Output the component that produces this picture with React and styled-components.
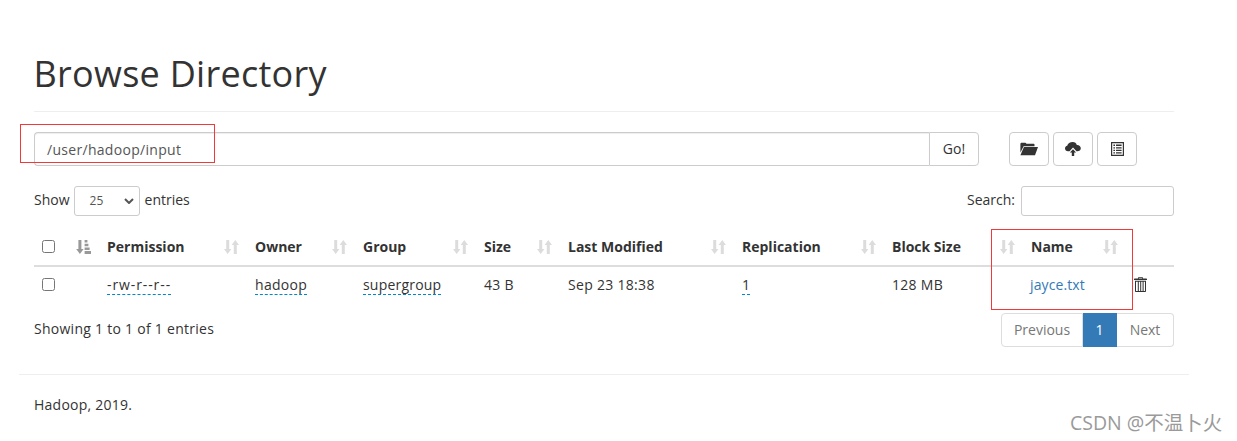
import React from 'react';
import styled, { createGlobalStyle } from 'styled-components';

const GlobalStyle = createGlobalStyle`
  * { box-sizing: border-box; }
  html, body { margin: 0; padding: 0; background: #fff; }
  body {
    font-family: "Open Sans", "Noto Sans", "Liberation Sans", sans-serif;
    font-size: 14px;
    line-height: 20px;
    color: #333;
  }
`;

const Page = styled.div`
  position: relative;
  width: 1237px;
  height: 441px;
  padding-left: 19px;
  overflow: hidden;
`;

const Container = styled.div`
  width: 1170px;
`;

const Content = styled.div`
  padding: 0 15px;
`;

const Header = styled.div`
  height: 112px;
  padding-top: 50px;
  border-bottom: 1px solid #eee;
`;

const Title = styled.h1`
  margin: 0 0 0 -0.5px;
  font-size: 36px;
  font-weight: 400;
  line-height: 48px;
  letter-spacing: 0.28px;
`;

const Toolbar = styled.div`
  display: flex;
  margin-top: 20px;
`;

const PathGroup = styled.div`
  display: flex;
  width: 945px;
  height: 34px;
`;

const PathInput = styled.div`
  flex: 1;
  padding: 7px 12px;
  border: 1px solid #ccc;
  border-right: 0;
  border-radius: 4px 0 0 4px;
  color: #555;
  letter-spacing: 0.3px;
  box-shadow: inset 0 1px 1px rgba(0, 0, 0, 0.075);
`;

const Button = styled.button`
  display: flex;
  align-items: center;
  justify-content: center;
  width: ${(p) => p.$width || 40}px;
  height: 34px;
  padding: 0;
  border: 1px solid #ccc;
  border-radius: ${(p) => (p.$joined ? '0 4px 4px 0' : '4px')};
  background: #fff;
  color: #333;
  font: inherit;
`;

const IconGroup = styled.div`
  display: flex;
  gap: 4px;
  margin-left: 30px;
`;

const Controls = styled.div`
  display: flex;
  justify-content: space-between;
  align-items: center;
  height: 30px;
  margin-top: 20px;
`;

const Label = styled.div`
  display: flex;
  align-items: center;
  gap: 4px;
  margin-top: -2px;
`;

const SelectBox = styled.div`
  display: flex;
  align-items: center;
  justify-content: space-between;
  width: 66px;
  height: 30px;
  margin: 2px 1px 0 0;
  padding: 0 5px 0 15px;
  border: 1px solid #ccc;
  border-radius: 3px;
  font-size: 12px;
  color: #555;
`;

const SearchBox = styled.div`
  width: 153px;
  height: 30px;
  margin-top: 2px;
  margin-left: 2px;
  border: 1px solid #ccc;
  border-radius: 3px;
`;

const Table = styled.table`
  width: 1140px;
  margin-top: 12px;
  border-collapse: collapse;
  table-layout: fixed;
`;

const Th = styled.th`
  height: 38px;
  padding: 8px;
  border-bottom: 2px solid #ddd;
  text-align: left;
  font-weight: 700;
  vertical-align: middle;
`;

const ThInner = styled.div`
  display: flex;
  align-items: center;
  justify-content: space-between;
`;

const Td = styled.td`
  height: 37px;
  padding: 8px;
  vertical-align: middle;
  letter-spacing: 0.3px;
`;

const Check = styled.span`
  display: block;
  width: 13px;
  height: 13px;
  margin-top: -1px;
  border: 1px solid #767676;
  border-radius: 2.5px;
  background: #fff;
`;

const Editable = styled.span`
  display: inline-block;
  line-height: 19px;
  border-bottom: 1px dashed #08c;
  letter-spacing: ${(p) => p.$spacing || 0.2}px;
`;

const FileLink = styled.span`
  color: #337ab7;
  margin-left: -1px;
  letter-spacing: 0.1px;
`;

const Footer = styled.div`
  display: flex;
  justify-content: space-between;
  align-items: flex-start;
  margin-top: 10px;
`;

const Info = styled.div`
  padding-top: 6px;
  letter-spacing: 0.27px;
`;

const Pagination = styled.div`
  display: flex;
  height: 34px;
`;

const PageItem = styled.span`
  display: flex;
  align-items: center;
  justify-content: center;
  width: ${(p) => p.$width}px;
  border: 1px solid ${(p) => (p.$active ? '#337ab7' : '#ddd')};
  border-left-width: ${(p) => (p.$first ? 1 : 0)}px;
  border-radius: ${(p) => p.$radius || 0};
  background: ${(p) => (p.$active ? '#337ab7' : '#fff')};
  color: ${(p) => (p.$active ? '#fff' : '#777')};
`;

const Rule = styled.hr`
  height: 1px;
  margin: 27px 0 0;
  border: 0;
  background: #eee;
`;

const Copyright = styled.p`
  margin: 20px 15px 0;
  letter-spacing: 0.25px;
`;

const RedBox = styled.div`
  position: absolute;
  left: ${(p) => p.$left}px;
  top: ${(p) => p.$top}px;
  width: ${(p) => p.$w}px;
  height: ${(p) => p.$h}px;
  border: 1px solid #f03a3a;
  pointer-events: none;
`;

const Watermark = styled.div`
  position: absolute;
  left: 1070px;
  top: 410px;
  font-family: "Open Sans", "Noto Sans CJK SC", sans-serif;
  font-size: 19.5px;
  line-height: 26px;
  color: #9a9a9a;
  white-space: nowrap;
`;

const TrashSvg = styled.svg`
  display: block;
  margin-top: -2px;
`;

const SortIcon = ({ active }) => (
  <svg width="15" height="14" viewBox="0 0 15 14" fill={active ? '#999' : '#dcdcdc'}>
    {active ? (
      <>
        <path d="M2.4 0h3v9h2.2L3.9 14 .2 9h2.2z" />
        <path d="M8.6 0h2.8v2.4H8.6zM8.6 3.8h3.8v2.4H8.6zM8.6 7.6h5V10h-5zM8.6 11H15v3H8.6z" />
      </>
    ) : (
      <>
        <path d="M2.2 0h3v9h2.2L3.7 14 0 9h2.2z" />
        <path d="M11.3 0L15 5h-2.2v9h-3V5H7.6z" />
      </>
    )}
  </svg>
);

const FolderIcon = () => (
  <svg width="18" height="14" viewBox="0 0 18 14" fill="#333">
    <path d="M.4 2.2C.4 1.3 1 .8 1.8.8h3.4c.6 0 1 .4 1.2 1h7c.7 0 1.1.4 1.1 1v1.4H3.6L.4 10.6z" />
    <path d="M3.9 4.9H18l-3 8.3H.4z" />
  </svg>
);

const CloudIcon = () => (
  <svg width="16" height="14" viewBox="0 0 16 14" fill="#333">
    <path d="M7.8 0c2 0 3.6 1.3 4 3.1 2.2-.2 4 1.2 4 3.2 0 1.9-1.5 3-3.4 3h-.9L8 5.6 4.5 9.3H3C1.3 9.3 0 8 0 6.5c0-1.3.9-2.4 2.2-2.7C2.7 1.6 5 0 7.8 0z" />
    <path d="M8 7.2l3.1 3.3H9.2V14H6.8v-3.5H4.9z" />
  </svg>
);

const ListIcon = () => (
  <svg width="13" height="14" viewBox="0 0 13 14" fill="#333">
    <path fillRule="evenodd" d="M0 0h13v14H0zM1.2 1.2v11.6h10.6V1.2z" />
    <path d="M2.4 2.6h1.6v1.4H2.4zM5 2.6h5.6v1.4H5zM2.4 5.2h1.6v1.4H2.4zM5 5.2h5.6v1.4H5zM2.4 7.7h1.6v1.4H2.4zM5 7.7h5.6v1.4H5zM2.4 10.2h1.6v1.4H2.4zM5 10.2h5.6v1.4H5z" />
  </svg>
);

const TrashIcon = () => (
  <TrashSvg width="13" height="15" viewBox="0 0 13 15" fill="#333">
    <path d="M4.5 0h4l.5 1.6h3.4c.3 0 .6.3.6.6v.8H0v-.8c0-.3.3-.6.6-.6H4zM5 .8l-.2.8h3.4L8 .8z" />
    <path d="M1 3.8h11V14c0 .6-.4 1-1 1H2c-.6 0-1-.4-1-1zm1 1v9.2h1.8V4.8zm2.8 0v9.2h1.4V4.8zm2.4 0v9.2h1.4V4.8zm2.4 0v9.2H11V4.8z" />
  </TrashSvg>
);

const Chevron = () => (
  <svg width="10" height="6" viewBox="0 0 10 6" fill="none" stroke="#555" strokeWidth="2">
    <path d="M1 1l4 4 4-4" />
  </svg>
);

const columns = [
  { name: 'Permission', width: 148 },
  { name: 'Owner', width: 108 },
  { name: 'Group', width: 121 },
  { name: 'Size', width: 84 },
  { name: 'Last Modified', width: 174 },
  { name: 'Replication', width: 150 },
  { name: 'Block Size', width: 139 },
];

export default function App() {
  return (
    <>
      <GlobalStyle />
      <Page>
        <Container>
          <Content>
            <Header>
              <Title>Browse Directory</Title>
            </Header>

            <Toolbar>
              <PathGroup>
                <PathInput>/user/hadoop/input</PathInput>
                <Button $width={50} $joined>Go!</Button>
              </PathGroup>
              <IconGroup>
                <Button><FolderIcon /></Button>
                <Button><CloudIcon /></Button>
                <Button><ListIcon /></Button>
              </IconGroup>
            </Toolbar>

            <Controls>
              <Label>
                Show
                <SelectBox>25 <Chevron /></SelectBox>
                entries
              </Label>
              <Label>
                Search:
                <SearchBox />
              </Label>
            </Controls>

            <Table>
              <colgroup>
                <col style={{ width: 65 }} />
                {columns.map((c) => <col key={c.name} style={{ width: c.width }} />)}
                <col style={{ width: 103 }} />
                <col style={{ width: 48 }} />
              </colgroup>
              <thead>
                <tr>
                  <Th>
                    <ThInner><Check /><SortIcon active /></ThInner>
                  </Th>
                  {columns.map((c) => (
                    <Th key={c.name}>
                      <ThInner>{c.name}<SortIcon /></ThInner>
                    </Th>
                  ))}
                  <Th>
                    <ThInner>Name<SortIcon /></ThInner>
                  </Th>
                  <Th />
                </tr>
              </thead>
              <tbody>
                <tr>
                  <Td><Check /></Td>
                  <Td><Editable $spacing={0.9}>-rw-r--r--</Editable></Td>
                  <Td><Editable $spacing={0.3}>hadoop</Editable></Td>
                  <Td><Editable>supergroup</Editable></Td>
                  <Td>43 B</Td>
                  <Td>Sep 23 18:38</Td>
                  <Td><Editable>1</Editable></Td>
                  <Td>128 MB</Td>
                  <Td><FileLink>jayce.txt</FileLink></Td>
                  <Td><TrashIcon /></Td>
                </tr>
              </tbody>
            </Table>

            <Footer>
              <Info>Showing 1 to 1 of 1 entries</Info>
              <Pagination>
                <PageItem $width={82} $first $radius="4px 0 0 4px">Previous</PageItem>
                <PageItem $width={34} $active>1</PageItem>
                <PageItem $width={57} $radius="0 4px 4px 0">Next</PageItem>
              </Pagination>
            </Footer>
          </Content>

          <Rule />
          <Copyright>Hadoop, 2019.</Copyright>
        </Container>

        <RedBox $left={20} $top={124} $w={195} $h={39} />
        <RedBox $left={991} $top={229} $w={142} $h={81} />
        <Watermark>CSDN @不温卜火</Watermark>
      </Page>
    </>
  );
}
